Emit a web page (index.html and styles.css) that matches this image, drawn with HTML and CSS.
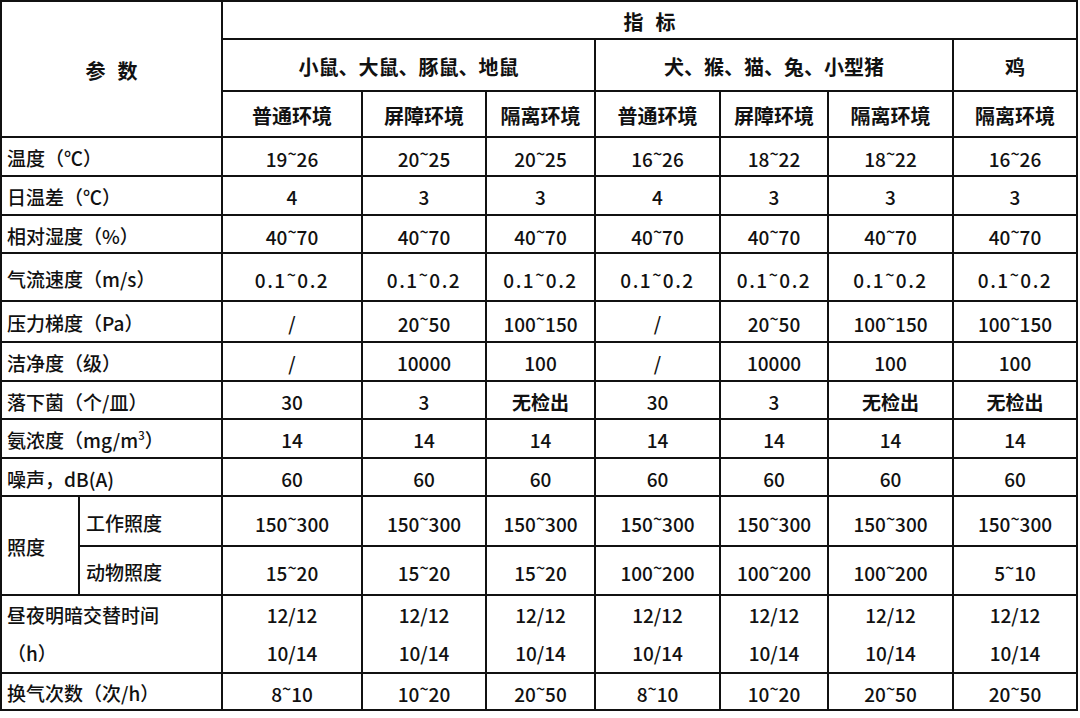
FILE: index.html
```html
<!DOCTYPE html>
<html lang="zh-CN">
<head>
<meta charset="utf-8">
<title>实验动物环境指标</title>
<link rel="stylesheet" href="styles.css">
</head>
<body>
<table class="spec">
  <colgroup>
    <col class="c-a"><col class="c-b">
    <col class="c140"><col class="c124"><col class="c109">
    <col class="c125"><col class="c108"><col class="c125"><col class="c124">
  </colgroup>
  <tbody>
    <tr class="h38">
      <th class="spaced" rowspan="3" colspan="2">参数</th>
      <th class="spaced" colspan="7">指标</th>
    </tr>
    <tr class="h52">
      <th colspan="3">小鼠、大鼠、豚鼠、地鼠</th>
      <th colspan="3">犬、猴、猫、兔、小型猪</th>
      <th>鸡</th>
    </tr>
    <tr class="h46">
      <th>普通环境</th><th>屏障环境</th><th>隔离环境</th>
      <th>普通环境</th><th>屏障环境</th><th>隔离环境</th><th>隔离环境</th>
    </tr>
    <tr class="h39">
      <td class="lbl" colspan="2">温度（℃）</td>
      <td>19<span class="t">~</span>26</td><td>20<span class="t">~</span>25</td><td>20<span class="t">~</span>25</td>
      <td>16<span class="t">~</span>26</td><td>18<span class="t">~</span>22</td><td>18<span class="t">~</span>22</td><td>16<span class="t">~</span>26</td>
    </tr>
    <tr class="h39">
      <td class="lbl" colspan="2">日温差（℃）</td>
      <td>4</td><td>3</td><td>3</td><td>4</td><td>3</td><td>3</td><td>3</td>
    </tr>
    <tr class="h38">
      <td class="lbl" colspan="2">相对湿度（%）</td>
      <td>40<span class="t">~</span>70</td><td>40<span class="t">~</span>70</td><td>40<span class="t">~</span>70</td>
      <td>40<span class="t">~</span>70</td><td>40<span class="t">~</span>70</td><td>40<span class="t">~</span>70</td><td>40<span class="t">~</span>70</td>
    </tr>
    <tr class="h48">
      <td class="lbl" colspan="2">气流速度（m/s）</td>
      <td class="mono">0.1<span class="t">~</span>0.2</td><td class="mono">0.1<span class="t">~</span>0.2</td><td class="mono">0.1<span class="t">~</span>0.2</td>
      <td class="mono">0.1<span class="t">~</span>0.2</td><td class="mono">0.1<span class="t">~</span>0.2</td><td class="mono">0.1<span class="t">~</span>0.2</td><td class="mono">0.1<span class="t">~</span>0.2</td>
    </tr>
    <tr class="h41">
      <td class="lbl" colspan="2">压力梯度（Pa）</td>
      <td>/</td><td>20<span class="t">~</span>50</td><td>100<span class="t">~</span>150</td>
      <td>/</td><td>20<span class="t">~</span>50</td><td>100<span class="t">~</span>150</td><td>100<span class="t">~</span>150</td>
    </tr>
    <tr class="h39">
      <td class="lbl" colspan="2">洁净度（级）</td>
      <td>/</td><td>10000</td><td>100</td><td>/</td><td>10000</td><td>100</td><td>100</td>
    </tr>
    <tr class="h38">
      <td class="lbl" colspan="2">落下菌（个/皿）</td>
      <td>30</td><td>3</td><td class="b">无检出</td><td>30</td><td>3</td><td class="b">无检出</td><td class="b">无检出</td>
    </tr>
    <tr class="h39">
      <td class="lbl" colspan="2">氨浓度（mg/m<sup>3</sup>）</td>
      <td>14</td><td>14</td><td>14</td><td>14</td><td>14</td><td>14</td><td>14</td>
    </tr>
    <tr class="h38">
      <td class="lbl" colspan="2">噪声，dB(A)</td>
      <td>60</td><td>60</td><td>60</td><td>60</td><td>60</td><td>60</td><td>60</td>
    </tr>
    <tr class="h50">
      <td class="lbl" rowspan="2">照度</td>
      <td class="lbl sub">工作照度</td>
      <td>150<span class="t">~</span>300</td><td>150<span class="t">~</span>300</td><td>150<span class="t">~</span>300</td>
      <td>150<span class="t">~</span>300</td><td>150<span class="t">~</span>300</td><td>150<span class="t">~</span>300</td><td>150<span class="t">~</span>300</td>
    </tr>
    <tr class="h49">
      <td class="lbl sub">动物照度</td>
      <td>15<span class="t">~</span>20</td><td>15<span class="t">~</span>20</td><td>15<span class="t">~</span>20</td>
      <td>100<span class="t">~</span>200</td><td>100<span class="t">~</span>200</td><td>100<span class="t">~</span>200</td><td>5<span class="t">~</span>10</td>
    </tr>
    <tr class="h76 tall">
      <td class="lbl" colspan="2">昼夜明暗交替时间<br>（h）</td>
      <td>12/12<br>10/14</td><td>12/12<br>10/14</td><td>12/12<br>10/14</td>
      <td>12/12<br>10/14</td><td>12/12<br>10/14</td><td>12/12<br>10/14</td><td>12/12<br>10/14</td>
    </tr>
    <tr class="h37">
      <td class="lbl" colspan="2">换气次数（次/h）</td>
      <td>8<span class="t">~</span>10</td><td>10<span class="t">~</span>20</td><td>20<span class="t">~</span>50</td>
      <td>8<span class="t">~</span>10</td><td>10<span class="t">~</span>20</td><td>20<span class="t">~</span>50</td><td>20<span class="t">~</span>50</td>
    </tr>
  </tbody>
</table>
</body>
</html>
```

FILE: styles.css
```css
html, body {
  margin: 0;
  padding: 0;
  background: #ffffff;
}

body {
  font-family: "Noto Sans CJK SC", "Noto Sans", "Liberation Sans", sans-serif;
  color: #111111;
  font-size: 19px;
}

.spec {
  border-collapse: collapse;
  table-layout: fixed;
  width: 1078px;
  margin: 0;
}

.c-a { width: 78px; }
.c-b { width: 143px; }
.c140 { width: 140px; }
.c124 { width: 124px; }
.c109 { width: 109px; }
.c125 { width: 125px; }
.c108 { width: 108px; }

.spec th,
.spec td {
  border: 2px solid #111111;
  padding: 4px 0 0 0;
  text-align: center;
  vertical-align: middle;
  line-height: 1.2;
  white-space: nowrap;
}

.spec th {
  font-weight: 700;
  font-size: 20px;
}

.spec th.spaced {
  letter-spacing: 12px;
  text-indent: 12px;
}

.spec td {
  font-weight: 500;
}

.spec td.lbl {
  text-align: left;
  padding-left: 5px;
}

.spec td.sub {
  padding-left: 6px;
}

.spec td.b {
  font-weight: 700;
}

.spec td.mono {
  letter-spacing: 1.5px;
}

.t {
  display: inline-block;
  font-size: 0.85em;
  vertical-align: 0.45em;
  line-height: 1;
}

sup {
  font-size: 0.6em;
  vertical-align: 0.7em;
  line-height: 1;
}

.spec .tall td {
  padding-top: 0;
  line-height: 38px;
}

.h37 { height: 37px; }
.h38 { height: 38px; }
.h39 { height: 39px; }
.h41 { height: 41px; }
.h46 { height: 46px; }
.h48 { height: 48px; }
.h49 { height: 49px; }
.h50 { height: 50px; }
.h52 { height: 52px; }
.h76 { height: 76px; }
```
